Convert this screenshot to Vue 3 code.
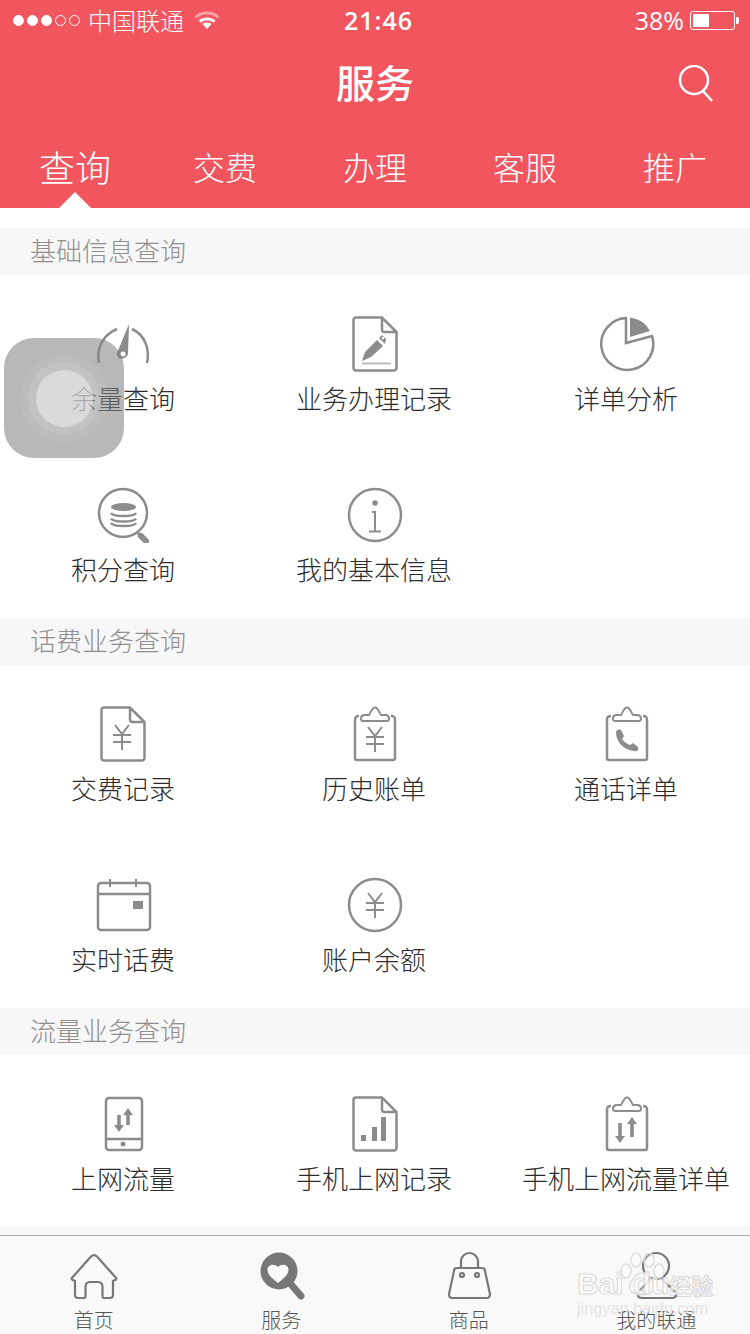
<script setup>
const yen = (x, y) => `<path d="M${x - 7} ${y}l7 9 7-9M${x - 9} ${y + 10}h18M${x - 9} ${y + 17}h18M${x} ${y + 9}v16" stroke-width="2"/>`
const clip = `<path d="M15 10C12 10 11 11 11 14V52a2 2 0 0 0 2 2H49a2 2 0 0 0 2-2V14C51 11 50 10 47 10"/><path d="M19 15C16 15 16 10 20 9H25C27 6 28 1.500 31 1.500S35 6 37 9H42C46 10 46 15 43 15Z" stroke-width="2"/>`
const doc = `<path d="M12 1.500H38L52.500 16V52a2.500 2.500 0 0 1-2.500 2.500H12A2.500 2.500 0 0 1 9.500 52V4A2.500 2.500 0 0 1 12 1.500Z"/><path d="M38 2V13.500a2.500 2.500 0 0 0 2.500 2.500H52"/>`
const arrows = (dx, dy, ux, uy, len) => `<path d="M${dx - 1.8} ${dy}h3.600v${len - 6}h3.200l-5 7-5-7h3.200Z" fill="#8c8c8c" stroke="none"/><path d="M${ux - 1.8} ${uy + len}h3.600v${-(len - 6)}h3.200l-5-7-5 7h3.200Z" fill="#8c8c8c" stroke="none"/>`

const icons = {
  gauge: `<path d="M6 47C3 32 10 19 24 13M39 13C52 19 57 33 54 47" stroke-width="2.500"/><path d="M36 8L24 37C23 44 33 45 35 38Z" fill="#8c8c8c" stroke="none"/><circle cx="30" cy="38" r="2.500" fill="#fff" stroke="none"/>`,
  pen: doc + `<path d="M18 45L21 36L33 24L39 30L27 41Z" fill="#8c8c8c" stroke="none"/><path d="M35 22L38 19L42 23L41 28Z" fill="#8c8c8c" stroke="none"/><circle cx="39" cy="22" r="1.200" fill="#fff" stroke="none"/><path d="M18 47.500H47" stroke="#bbb" stroke-width="2"/>`,
  pie: `<path d="M56 20A26 26 0 1 1 30 2V27Z"/><path d="M34 21V1.500A26 26 0 0 1 54 15Z" fill="#8c8c8c" stroke="none"/>`,
  coins: `<circle cx="30" cy="26" r="24"/><path d="M44 45L48 49" stroke-width="2.500"/><path d="M48 49L53 54" stroke-width="6" stroke-linecap="round"/><ellipse cx="30.500" cy="20" rx="12.500" ry="4" fill="#8c8c8c" stroke="none"/><path d="M18 26C20 30 41 30 43 26M18 31.500C20 35.500 41 35.500 43 31.500M18 36C20 40 41 40 43 36" stroke-width="2.500"/>`,
  info: `<circle cx="31" cy="28" r="26"/><circle cx="31" cy="16" r="2.800" fill="#8c8c8c" stroke="none"/><path d="M28 25H31V44M25 44.500H37" stroke-width="2"/>`,
  yendoc: `<g transform="translate(-1)">${doc}</g>` + yen(29, 19),
  yenclip: clip + yen(31, 21),
  phoneclip: clip + `<path d="M20 26C20 24 23 23 25 24L28 30L26 33C28 36 31 38 34 39L37 37L42 41C43 44 41 46 38 45C28 44 20 36 20 26Z" fill="#8c8c8c" stroke="none"/>`,
  calendar: `<rect x="5" y="6" width="52" height="47" rx="3"/><path d="M5 17H57"/><path d="M17 2V10M43 2V10" stroke-width="2"/><rect x="40" y="24" width="10" height="8" fill="#8c8c8c" stroke="none"/>`,
  yencoin: `<circle cx="31" cy="28" r="26"/>` + yen(31, 16),
  phone: `<rect x="13" y="2" width="36" height="52" rx="3"/><path d="M13 43H49"/><circle cx="30" cy="48" r="2.500" fill="#8c8c8c" stroke="none"/>` + arrows(26, 19, 35, 13, 16),
  chart: doc + `<path d="M17 39h5v6h-5ZM28 31h5v14h-5ZM37 21h5v24h-5Z" fill="#8c8c8c" stroke="none"/>`,
  flowclip: clip + arrows(24, 27, 36, 22, 19)
}

const sections = [
  { title: '基础信息查询', items: [
    { label: '余量查询', icon: 'gauge' }, { label: '业务办理记录', icon: 'pen' }, { label: '详单分析', icon: 'pie' },
    { label: '积分查询', icon: 'coins' }, { label: '我的基本信息', icon: 'info' }
  ] },
  { title: '话费业务查询', items: [
    { label: '交费记录', icon: 'yendoc' }, { label: '历史账单', icon: 'yenclip' }, { label: '通话详单', icon: 'phoneclip' },
    { label: '实时话费', icon: 'calendar' }, { label: '账户余额', icon: 'yencoin' }
  ] },
  { title: '流量业务查询', items: [
    { label: '上网流量', icon: 'phone' }, { label: '手机上网记录', icon: 'chart' }, { label: '手机上网流量详单', icon: 'flowclip' }
  ] }
]

const tabs = ['查询', '交费', '办理', '客服', '推广']

const footerIcons = {
  home: `<path d="M7 29L27 6.500C29 4.500 31 4.500 33 6.500L53 29M7 29L11 31V45C11 47 12 48 14 48H20C21 48 21.500 47.500 21.500 46V37C21.500 34 23 32 26 32H34C37 32 38.500 34 38.500 37V46C38.500 47.500 39 48 40 48H46C48 48 49 47 49 45V31L53 29"/>`,
  search: `<circle cx="28" cy="21" r="18.500" fill="#777" stroke="none"/><path d="M38 32L50 46" stroke-width="7" stroke-linecap="round"/><path d="M27 33C22 29 16.500 25 16.500 19.500C16.500 15 23 13 27 17C31 13 37.500 15 37.500 19.500C37.500 25 32 29 27 33Z" fill="#f9f9f9" stroke="none"/>`,
  bag: `<path d="M18 18H43C45 18 46 19 46 21L51 44C51 47 50 48 48 48H13C11 48 10 47 10 44L15 21C15 19 16 18 18 18Z"/><path d="M22 18V11.500a8.500 8.500 0 0 1 17 0V18"/><circle cx="23" cy="25" r="2"/><circle cx="38" cy="25" r="2"/>`,
  user: `<circle cx="30" cy="16" r="13"/><path d="M23 28C24 34 12 38 12 45C12 47 14 48 16 48H46C48 48 50 47 50 45C50 38 36 34 37 28"/>`
}

const footer = [
  { label: '首页', icon: 'home' }, { label: '服务', icon: 'search' },
  { label: '商品', icon: 'bag' }, { label: '我的联通', icon: 'user' }
]
</script>

<template>
  <div class="page">
    <header class="head">
      <div class="status">
        <div class="status-left">
          <span class="signal">
            <i class="dot on"></i><i class="dot on"></i><i class="dot on"></i><i class="dot"></i><i class="dot"></i>
          </span>
          <span class="carrier">中国联通</span>
          <svg class="wifi" width="26" height="20" viewBox="0 0 26 20" fill="none">
            <path d="M1.500 7.500C7.500 1.500 18.500 1.500 24.500 7.500" stroke="#fff" stroke-opacity=".45" stroke-width="3"/>
            <path d="M5.500 11.500C9.500 8 16.500 8 20.500 11.500" stroke="#fff" stroke-width="3"/>
            <path d="M8.500 14L13 19L17.500 14C15 12 11 12 8.500 14Z" fill="#fff"/>
          </svg>
        </div>
        <span class="time">21:46</span>
        <div class="status-right">
          <span class="percent">38%</span>
          <span class="battery"><i class="battery-fill"></i></span>
          <i class="battery-nub"></i>
        </div>
      </div>
      <div class="nav">
        <span></span>
        <h1 class="title">服务</h1>
        <svg class="nav-search" width="36" height="38" viewBox="0 0 36 38" fill="none" stroke="#fff" stroke-width="2.500">
          <circle cx="16" cy="15" r="14"/>
          <path d="M25 26L34 36"/>
        </svg>
      </div>
      <nav class="tabs">
        <div v-for="(t, i) in tabs" :key="t" class="tab" :class="{ active: i === 0 }">{{ t }}</div>
      </nav>
    </header>

    <main class="content">
      <section v-for="s in sections" :key="s.title" class="section">
        <h2 class="section-title">{{ s.title }}</h2>
        <div class="grid">
          <div v-for="it in s.items" :key="it.label" class="cell">
            <svg class="icon" width="60" height="56" viewBox="0 0 60 56" fill="none" stroke="#8c8c8c" stroke-width="2.500" v-html="icons[it.icon]"></svg>
            <span class="label">{{ it.label }}</span>
          </div>
        </div>
      </section>
    </main>

    <div class="gap"></div>

    <footer class="footer">
      <div v-for="f in footer" :key="f.label" class="foot-item">
        <svg width="60" height="50" viewBox="0 0 60 50" fill="none" stroke="#777" stroke-width="2.200" v-html="footerIcons[f.icon]"></svg>
        <span class="foot-label">{{ f.label }}</span>
      </div>
    </footer>

    <div class="touch" aria-hidden="true">
      <span class="ring r1"><span class="ring r2"><span class="ring r3"></span></span></span>
    </div>

    <div class="mark">
      <svg class="paw" width="46" height="44" viewBox="0 0 46 44" fill="#fff" fill-opacity=".3" stroke="#ddd" stroke-width="1.500">
        <ellipse cx="7" cy="18" rx="5" ry="7"/>
        <ellipse cx="17" cy="7" rx="5" ry="7"/>
        <ellipse cx="30" cy="7" rx="5" ry="7"/>
        <ellipse cx="40" cy="18" rx="5" ry="7"/>
        <path d="M23 20C30 20 38 32 34 38C30 43 16 43 12 38C8 32 16 20 23 20Z"/>
      </svg>
      <div class="mark-top"><span>Bai</span><span class="mark-du">du</span><span class="mark-cn">经验</span></div>
      <div class="mark-url">jingyan.baidu.com</div>
    </div>
  </div>
</template>

<style scoped>
.page {
  position: relative;
  width: 750px;
  height: 1334px;
  overflow: hidden;
  background: #fff;
  font-family: "Noto Sans CJK SC", "Noto Sans", sans-serif;
  font-weight: 300;
}
.head {
  background: #f1565f;
  color: #fff;
  height: 208px;
}
.status {
  height: 40px;
  padding: 0 11px 0 13px;
  display: grid;
  grid-template-columns: 1fr auto 1fr;
  align-items: center;
}
.status-left, .status-right {
  display: flex;
  align-items: center;
}
.status-right {
  justify-content: flex-end;
}
.signal {
  display: flex;
  gap: 3px;
}
.dot {
  width: 11px;
  height: 11px;
  box-sizing: border-box;
  border-radius: 50%;
  border: 1px solid #fff;
}
.dot.on {
  background: #fff;
}
.carrier {
  margin-left: 8px;
  font-size: 24px;
  line-height: 38px;
}
.wifi {
  margin-left: 10px;
}
.time {
  margin-left: 5px;
  font-family: "Open Sans", "Liberation Sans", sans-serif;
  font-size: 25px;
  font-weight: 600;
  letter-spacing: 1px;
}
.percent {
  font-family: "Open Sans", "Liberation Sans", sans-serif;
  font-size: 25px;
  font-weight: 400;
}
.battery {
  margin-left: 6px;
  box-sizing: border-box;
  width: 45px;
  height: 19px;
  padding: 2px;
  border: 1px solid #fff;
  border-radius: 3px;
  display: flex;
}
.battery-fill {
  width: 16px;
  background: #fff;
}
.battery-nub {
  width: 3px;
  height: 7px;
  background: #fff;
  border-radius: 0 2px 2px 0;
  margin-left: 1px;
}
.nav {
  height: 90px;
  padding: 0 36px;
  display: grid;
  grid-template-columns: 1fr auto 1fr;
  align-items: center;
}
.title {
  margin: -7px 0 0;
  font-size: 39px;
  font-weight: 500;
  line-height: 1;
}
.nav-search {
  justify-self: end;
  margin-top: -2px;
}
.tabs {
  display: grid;
  grid-template-columns: repeat(5, 150px);
  height: 78px;
}
.tab {
  position: relative;
  text-align: center;
  font-size: 32px;
  line-height: 72px;
}
.tab.active {
  font-size: 36px;
}
.tab.active::after {
  content: "";
  position: absolute;
  left: 59px;
  bottom: 0;
  border-left: 16px solid transparent;
  border-right: 16px solid transparent;
  border-bottom: 16px solid #fff;
}
.content {
  padding-top: 20px;
}
.section-title {
  margin: 0;
  height: 47px;
  padding-left: 30px;
  background: #f7f7f7;
  color: #8f8f8f;
  font-size: 26px;
  font-weight: 300;
  line-height: 44px;
}
.grid {
  display: grid;
  grid-template-columns: 246px 256px 248px;
  grid-auto-rows: 171px;
  padding-bottom: 1px;
}
.section:last-child .grid {
  padding-bottom: 0;
}
.cell {
  display: flex;
  flex-direction: column;
  align-items: center;
  padding-top: 41px;
}
.icon {
  display: block;
}
.label {
  margin-top: 7px;
  color: #2c2c2c;
  font-size: 26px;
  line-height: 38px;
  white-space: nowrap;
}
.gap {
  height: 9px;
  background: #f7f7f7;
}
.footer {
  height: 99px;
  box-sizing: border-box;
  border-top: 1px solid #aaa;
  background: #f9f9f9;
  display: grid;
  grid-template-columns: repeat(4, 187.500px);
}
.foot-item {
  display: flex;
  flex-direction: column;
  align-items: center;
  padding-top: 14px;
}
.foot-label {
  margin-top: 8px;
  color: #555;
  font-size: 20px;
  line-height: 24px;
  white-space: nowrap;
}
.touch {
  position: absolute;
  left: 4px;
  top: 338px;
  width: 120px;
  height: 120px;
  border-radius: 30px;
  background: rgba(128, 128, 128, .56);
  display: flex;
  align-items: center;
  justify-content: center;
}
.ring {
  border-radius: 50%;
  display: flex;
  align-items: center;
  justify-content: center;
}
.r1 {
  width: 88px;
  height: 88px;
  background: rgba(255, 255, 255, .06);
}
.r2 {
  width: 72px;
  height: 72px;
  background: rgba(255, 255, 255, .1);
}
.r3 {
  width: 57px;
  height: 57px;
  background: rgba(255, 255, 255, .4);
}
.mark {
  position: absolute;
  left: 576px;
  top: 1253px;
  width: 134px;
  height: 62px;
}
.paw {
  position: absolute;
  left: 43px;
  top: 0;
}
.mark-top {
  position: absolute;
  left: 1px;
  top: 15px;
  display: flex;
  align-items: center;
  white-space: nowrap;
  font-family: "Liberation Sans", sans-serif;
  font-size: 30px;
  font-weight: 700;
  line-height: 32px;
  color: rgba(255, 255, 255, .75);
  -webkit-text-stroke: 1px #d8d8d8;
}
.mark-du {
  margin-left: 9px;
  flex: none;
}
.mark-cn {
  flex: none;
  margin-left: 0;
  font-family: "Noto Sans CJK SC", sans-serif;
  font-size: 22px;
}
.mark-url {
  position: absolute;
  left: 1px;
  top: 45px;
  font-family: "Liberation Sans", sans-serif;
  font-size: 16.300px;
  line-height: 20px;
  color: #e4e4e4;
  white-space: nowrap;
}
</style>
